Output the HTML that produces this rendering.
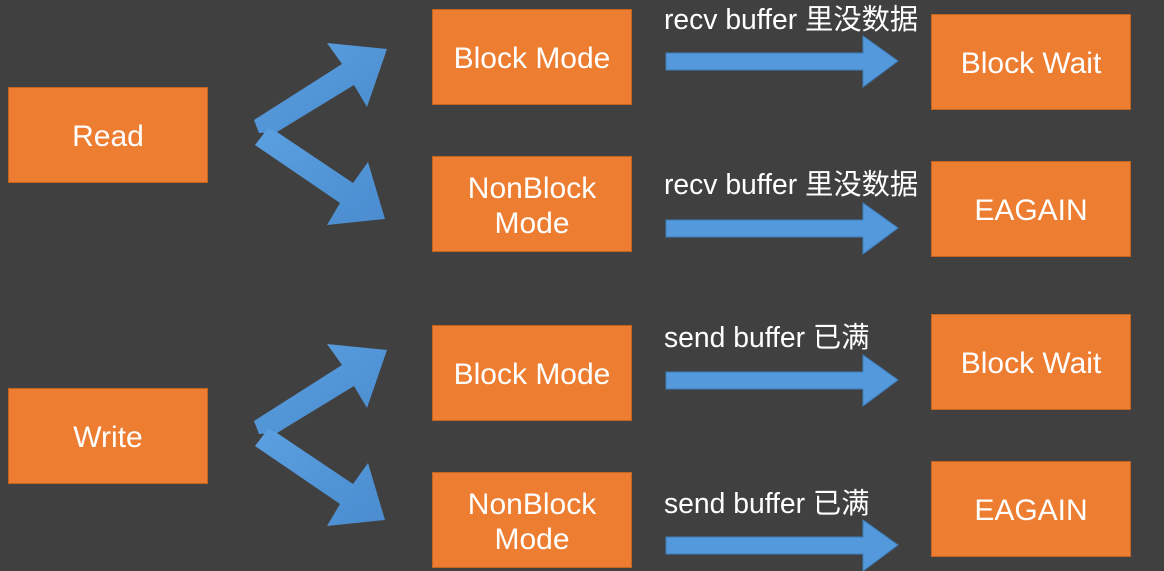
<!DOCTYPE html>
<html><head><meta charset="utf-8"><style>
body{margin:0;width:1164px;height:571px;background:#404040;position:relative;overflow:hidden;font-family:"Liberation Sans","Noto Sans CJK SC",sans-serif}
.b{position:absolute;width:198px;height:92px;padding-top:2px;background:#ED7D31;border:1px solid #C4651F;color:#fff;font-size:30px;display:flex;align-items:center;justify-content:center;text-align:center;line-height:35px}
.t{position:absolute;left:664px;color:#fff;font-size:28.3px;line-height:32px;white-space:nowrap}
svg{position:absolute;left:0;top:0}
</style></head><body>
<svg width="1164" height="571">
<defs><linearGradient id="g" x1="0" y1="0" x2="1" y2="1"><stop offset="0" stop-color="#5BA0E0"/><stop offset="1" stop-color="#4A8CCF"/></linearGradient>
<g id="d">
<polygon points="254,120 342,64 327,43 387,49 367,107 354,85 277,132 259,133" fill="url(#g)"/>
<polygon points="268,128 277,132 353,183 368,162 385,219 327,225 340,203 255,145" fill="url(#g)"/>
</g>
<polygon id="h" points="666,53 863,53 863,36 898,61 863,87 863,70 666,70" fill="#5399DB" stroke="#3F7DBA" stroke-width="1"/>
</defs>
<use href="#d"/><use href="#d" y="301"/>
<use href="#h"/><use href="#h" y="167"/><use href="#h" y="319"/><use href="#h" y="484"/>
</svg>
<div class="b" style="left:8px;top:87px">Read</div>
<div class="b" style="left:8px;top:388px">Write</div>
<div class="b" style="left:432px;top:9px">Block Mode</div>
<div class="b" style="left:432px;top:156px;padding-top:4px;height:90px">NonBlock<br>Mode</div>
<div class="b" style="left:432px;top:325px">Block Mode</div>
<div class="b" style="left:432px;top:472px;padding-top:4px;height:90px">NonBlock<br>Mode</div>
<div class="b" style="left:931px;top:14px">Block Wait</div>
<div class="b" style="left:931px;top:161px">EAGAIN</div>
<div class="b" style="left:931px;top:314px">Block Wait</div>
<div class="b" style="left:931px;top:461px">EAGAIN</div>
<div class="t" style="top:3px">recv buffer 里没数据</div>
<div class="t" style="top:168px">recv buffer 里没数据</div>
<div class="t" style="top:321px">send buffer 已满</div>
<div class="t" style="top:487px">send buffer 已满</div>
</body></html>
